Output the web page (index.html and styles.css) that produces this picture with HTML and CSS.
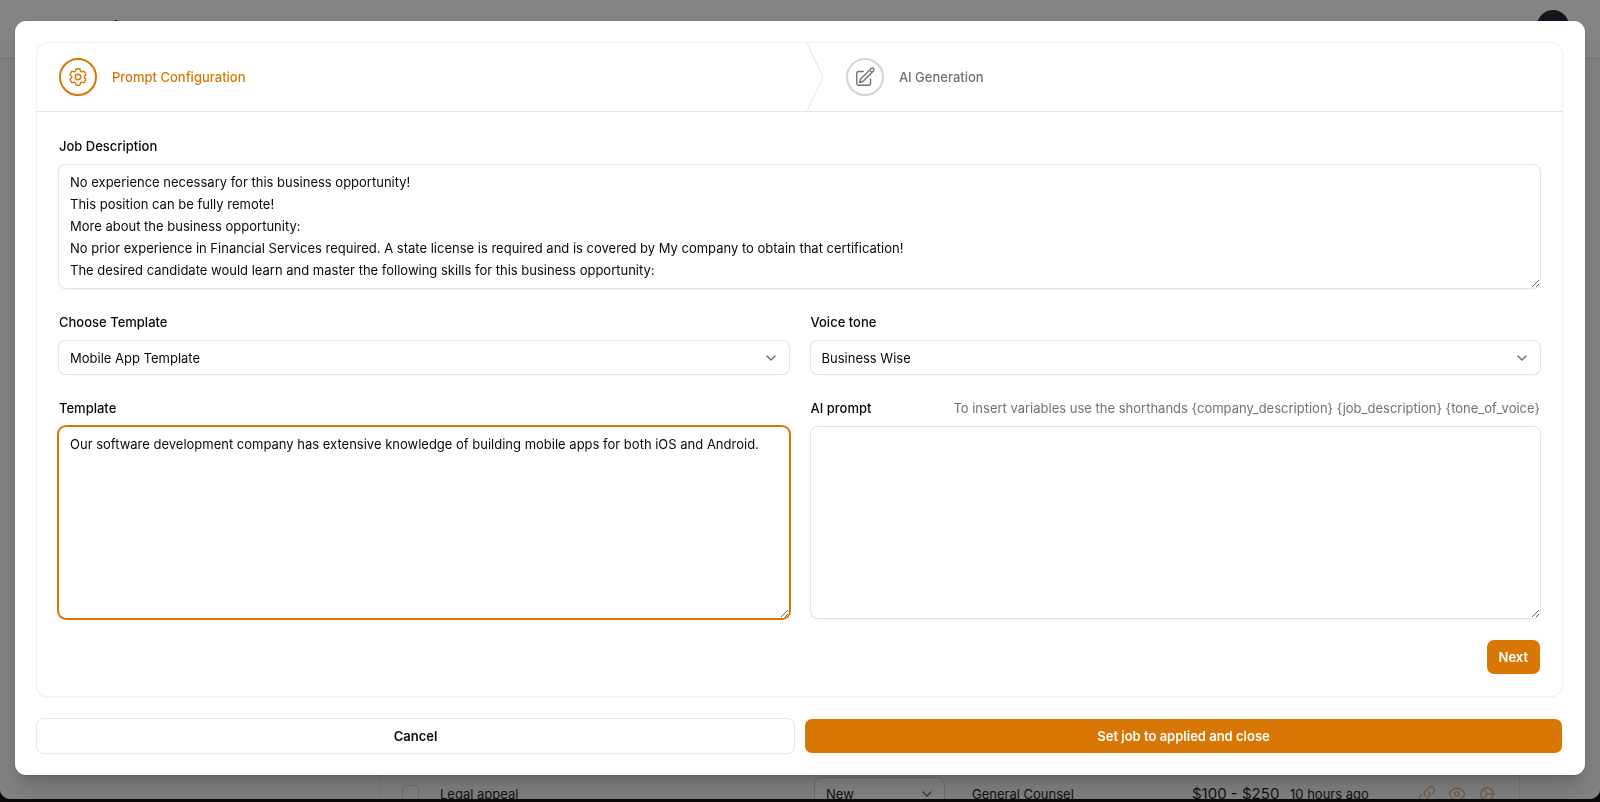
FILE: index.html
```html
<!DOCTYPE html>
<html lang="en">
<head>
<meta charset="utf-8">
<meta name="viewport" content="width=device-width, initial-scale=1">
<title>Job application</title>
<link rel="stylesheet" href="styles.css">
</head>
<body>
<div class="window">
  <header class="topbar">
    <span class="brand">Job Buddies</span>
    <span class="avatar"></span>
  </header>
  <main class="page">
    <div class="jobs">
      <div class="job-row">
        <input class="job-check" type="checkbox" aria-label="Select Legal appeal">
        <span class="job-title">Legal appeal</span>
        <span class="job-status select-wrap">
          <select class="job-select" aria-label="Status"><option>New</option></select>
          <svg class="chevron" viewBox="0 0 20 20" fill="none" stroke="currentColor" stroke-width="1.5" stroke-linecap="round" stroke-linejoin="round"><path d="M6 8l4 4 4-4"/></svg>
        </span>
        <span class="job-client">General Counsel</span>
        <span class="job-price">$100 - $250</span>
        <span class="job-time">10 hours ago</span>
        <span class="job-actions">
          <a href="#" aria-label="Open link"><svg viewBox="0 0 24 24"><path d="M13.19 8.688a4.5 4.5 0 0 1 1.242 7.244l-4.5 4.5a4.5 4.5 0 0 1-6.364-6.364l1.757-1.757m13.35-.622 1.757-1.757a4.5 4.5 0 0 0-6.364-6.364l-4.5 4.5a4.5 4.5 0 0 0 1.242 7.244"/></svg></a>
          <a href="#" aria-label="View"><svg viewBox="0 0 24 24"><path d="M2.036 12.322a1.012 1.012 0 0 1 0-.639C3.423 7.51 7.36 4.5 12 4.5c4.638 0 8.573 3.007 9.963 7.178.07.207.07.431 0 .639C20.577 16.49 16.64 19.5 12 19.5c-4.638 0-8.573-3.007-9.963-7.178Z"/><circle cx="12" cy="12" r="3"/></svg></a>
          <a href="#" aria-label="Configure"><svg viewBox="0 0 24 24"><circle cx="12" cy="12" r="8.3"/><path d="M12 12h8.3M12 12 7.8 4.8M12 12l-4.2 7.2M12 2.3v1.4M12 20.3v1.4M2.3 12h1.4M20.3 12h1.4M5.1 5.1l1 1M17.9 17.9l1 1M5.1 18.9l1-1M17.9 6.1l1-1"/></svg></a>
        </span>
      </div>
    </div>
  </main>
</div>

<div class="overlay">
  <form class="modal" role="dialog" aria-modal="true" aria-label="Generate application">
    <section class="wizard">
      <ol class="steps">
        <li class="step step-active">
          <button class="step-button" type="button">
            <span class="step-icon"><svg viewBox="0 0 24 24"><path d="M9.594 3.94c.09-.542.56-.94 1.11-.94h2.593c.55 0 1.02.398 1.11.94l.213 1.281c.063.374.313.686.645.87.074.04.147.083.22.127.325.196.72.257 1.075.124l1.217-.456a1.125 1.125 0 0 1 1.37.49l1.296 2.247a1.125 1.125 0 0 1-.26 1.431l-1.003.827c-.293.241-.438.613-.43.992a7.723 7.723 0 0 1 0 .255c-.008.378.137.75.43.991l1.004.827c.424.35.534.955.26 1.43l-1.298 2.247a1.125 1.125 0 0 1-1.369.491l-1.217-.456c-.355-.133-.75-.072-1.076.124a6.47 6.47 0 0 1-.22.128c-.331.183-.581.495-.644.869l-.213 1.281c-.09.543-.56.94-1.11.94h-2.594c-.55 0-1.019-.398-1.11-.94l-.213-1.281c-.062-.374-.312-.686-.644-.87a6.52 6.52 0 0 1-.22-.127c-.325-.196-.72-.257-1.076-.124l-1.217.456a1.125 1.125 0 0 1-1.369-.49l-1.297-2.247a1.125 1.125 0 0 1 .26-1.431l1.004-.827c.292-.24.437-.613.43-.991a6.932 6.932 0 0 1 0-.255c.007-.38-.138-.751-.43-.992l-1.004-.827a1.125 1.125 0 0 1-.26-1.43l1.297-2.247a1.125 1.125 0 0 1 1.37-.491l1.216.456c.356.133.751.072 1.076-.124.072-.044.146-.086.22-.128.332-.183.582-.495.644-.869l.214-1.28Z"/><circle cx="12" cy="12" r="3"/></svg></span>
            <span class="step-label">Prompt Configuration</span>
          </button>
          <svg class="step-divider" viewBox="0 0 17 67" preserveAspectRatio="none"><path d="M0 0 16 33.5 0 67" vector-effect="non-scaling-stroke"/></svg>
        </li>
        <li class="step">
          <button class="step-button" type="button">
            <span class="step-icon"><svg viewBox="0 0 24 24"><path d="m16.862 4.487 1.687-1.688a1.875 1.875 0 1 1 2.652 2.652L10.582 16.07a4.5 4.5 0 0 1-1.897 1.13L6 18l.8-2.685a4.5 4.5 0 0 1 1.13-1.897l8.932-8.931Zm0 0L19.5 7.125M18 14v4.75A2.25 2.25 0 0 1 15.75 21H5.25A2.25 2.25 0 0 1 3 18.75V8.25A2.25 2.25 0 0 1 5.25 6H10"/></svg></span>
            <span class="step-label">AI Generation</span>
          </button>
        </li>
      </ol>
      <div class="fields">
        <div class="field field-wide">
          <div class="field-head"><label for="description">Job Description</label></div>
          <textarea id="description" class="control description" rows="5">No experience necessary for this business opportunity!
This position can be fully remote!
More about the business opportunity:
No prior experience in Financial Services required. A state license is required and is covered by My company to obtain that certification!
The desired candidate would learn and master the following skills for this business opportunity:</textarea>
        </div>
        <div class="field">
          <div class="field-head"><label for="choose">Choose Template</label></div>
          <div class="select-wrap">
            <select id="choose" class="control"><option>Mobile App Template</option></select>
            <svg class="chevron" viewBox="0 0 20 20" fill="none" stroke="currentColor" stroke-width="1.5" stroke-linecap="round" stroke-linejoin="round"><path d="M6 8l4 4 4-4"/></svg>
          </div>
        </div>
        <div class="field">
          <div class="field-head"><label for="tone">Voice tone</label></div>
          <div class="select-wrap">
            <select id="tone" class="control"><option>Business Wise</option></select>
            <svg class="chevron" viewBox="0 0 20 20" fill="none" stroke="currentColor" stroke-width="1.5" stroke-linecap="round" stroke-linejoin="round"><path d="M6 8l4 4 4-4"/></svg>
          </div>
        </div>
        <div class="field">
          <div class="field-head"><label for="template">Template</label></div>
          <textarea id="template" class="control prompt-box control-active">Our software development company has extensive knowledge of building mobile apps for both iOS and Android.</textarea>
        </div>
        <div class="field">
          <div class="field-head"><label for="prompt">AI prompt</label><span class="hint">To insert variables use the shorthands {company_description} {job_description} {tone_of_voice}</span></div>
          <textarea id="prompt" class="control prompt-box"></textarea>
        </div>
        <div class="field-wide wizard-actions"><button class="button button-primary" type="button">Next</button></div>
      </div>
    </section>
    <footer class="modal-actions">
      <button class="button button-outline" type="button">Cancel</button>
      <button class="button button-primary" type="submit">Set job to applied and close</button>
    </footer>
  </form>
</div>
</body>
</html>
```

FILE: styles.css
```css
* { box-sizing: border-box; }

body {
  margin: 0;
  height: 100vh;
  overflow: hidden;
  padding-bottom: 3px;
  background: #0b0608;
  color: #09090b;
  font-family: Inter, "Liberation Sans", sans-serif;
  font-size: 13px;
  line-height: 22px;
}

button, select, textarea, input { font: inherit; color: inherit; margin: 0; }

/* Page behind the dialog */
.window {
  display: flex;
  flex-direction: column;
  height: 100%;
  overflow: hidden;
  border-radius: 0 0 10px 10px;
  background: #fafafa;
}
.topbar {
  display: flex;
  flex: none;
  align-items: center;
  justify-content: space-between;
  height: 59px;
  padding: 4px 31px 10px 26px;
  border-bottom: 1px solid #e4e4e7;
  background: #ffffff;
}
.brand { padding-top: 6px; font-size: 19px; font-weight: 700; }
.avatar { width: 32px; height: 32px; border-radius: 50%; background: #18202c; }
.page { display: flex; flex: 1; flex-direction: column; justify-content: flex-end; min-height: 0; padding: 0 80px 0 380px; }
.jobs { height: 33px; border: solid #e4e4e7; border-width: 0 1px; }
.job-row { display: flex; align-items: center; height: 55px; padding-left: 21px; color: #18181b; }
.job-check { appearance: none; width: 17px; height: 17px; border: 1px solid #d4d4d8; border-radius: 4px; }
.job-title { width: 374px; margin-left: 21px; }
.job-status { width: 131px; }
.job-select { appearance: none; width: 100%; height: 34px; padding: 0 11px; border: 1px solid #d4d4d8; border-radius: 8px; background: #ffffff; }
.job-client { width: 220px; margin-left: 27px; }
.job-price { width: 98px; font-size: 15px; }
.job-time { width: 128px; }
.job-actions { display: flex; gap: 12px; color: #e6a45a; }
.job-actions a { display: flex; color: inherit; }
.job-actions svg { width: 18px; height: 18px; fill: none; stroke: currentColor; stroke-width: 1.5; stroke-linecap: round; stroke-linejoin: round; }

/* Dialog */
.overlay { position: fixed; inset: 0 0 3px; padding: 21px 15px 24px; border-radius: 0 0 10px 10px; background: rgba(9, 9, 11, 0.5); }
.modal {
  display: flex;
  flex-direction: column;
  gap: 23px;
  padding: 22px 23px 22px 22px;
  border-radius: 11px;
  background: #ffffff;
  box-shadow: 0 0 0 1px rgba(9, 9, 11, 0.05), 0 18px 24px -4px rgba(0, 0, 0, 0.15), 0 8px 10px -6px rgba(0, 0, 0, 0.15);
}
.wizard { border-radius: 11px; box-shadow: 0 0 0 1px #f1f1f2, 0 1px 2px 1px rgba(0, 0, 0, 0.03); }

.steps { display: flex; margin: 0; padding: 0; list-style: none; border-bottom: 1px solid #e5e5e7; }
.step { position: relative; flex: 1 1 auto; color: #71717a; }
.step-button { display: flex; align-items: center; gap: 15px; width: 100%; padding: 15px 22px; border: 0; background: none; font-weight: 500; cursor: pointer; }
.step-icon { display: flex; align-items: center; justify-content: center; width: 38px; height: 38px; border: 2px solid #d4d4d8; border-radius: 50%; }
.step-icon svg { width: 22px; height: 22px; fill: none; stroke: currentColor; stroke-width: 1.5; stroke-linecap: round; stroke-linejoin: round; }
.step-active { color: #d97706; }
.step-active .step-icon { border-color: #d97706; }
.step-divider { position: absolute; top: 0; right: 0; width: 17px; height: 100%; fill: none; stroke: #e4e4e7; }

.fields { display: grid; grid-template-columns: 1fr 1fr; gap: 22px; padding: 22px; }
.field-wide { grid-column: 1 / -1; }
.field { display: flex; flex-direction: column; gap: 6px; min-width: 0; }
.field-head { display: flex; justify-content: space-between; line-height: 25px; font-weight: 500; }
.hint { color: #71717a; font-weight: 400; }
.control {
  display: block;
  width: 100%;
  min-height: 33px;
  padding: 6px 11px 7px;
  border: 0;
  border-radius: 7px;
  outline: 0;
  background: #ffffff;
  box-shadow: 0 0 0 1px #e4e4e7, 0 1px 2px 1px rgba(0, 0, 0, 0.04);
}
select.control { appearance: none; padding: 0 11px; }
.description { overflow: hidden; }
.prompt-box { height: 191px; }
.control-active { box-shadow: 0 0 0 2px #d97706; }
.select-wrap { position: relative; }
.chevron { position: absolute; top: 50%; right: 8px; width: 20px; height: 20px; margin-top: -10px; color: #71717a; pointer-events: none; }

.wizard-actions { display: flex; justify-content: flex-end; }
.button { height: 34px; padding: 0 12px; border: 0; border-radius: 7px; font-weight: 600; cursor: pointer; }
.button-primary { background: #d97706; color: #ffffff; }
.button-outline { background: #ffffff; box-shadow: 0 0 0 1px #e9e9eb, 0 1px 2px rgba(0, 0, 0, 0.05); }
.modal-actions { display: grid; grid-template-columns: 1fr 1fr; gap: 11px; }
```
